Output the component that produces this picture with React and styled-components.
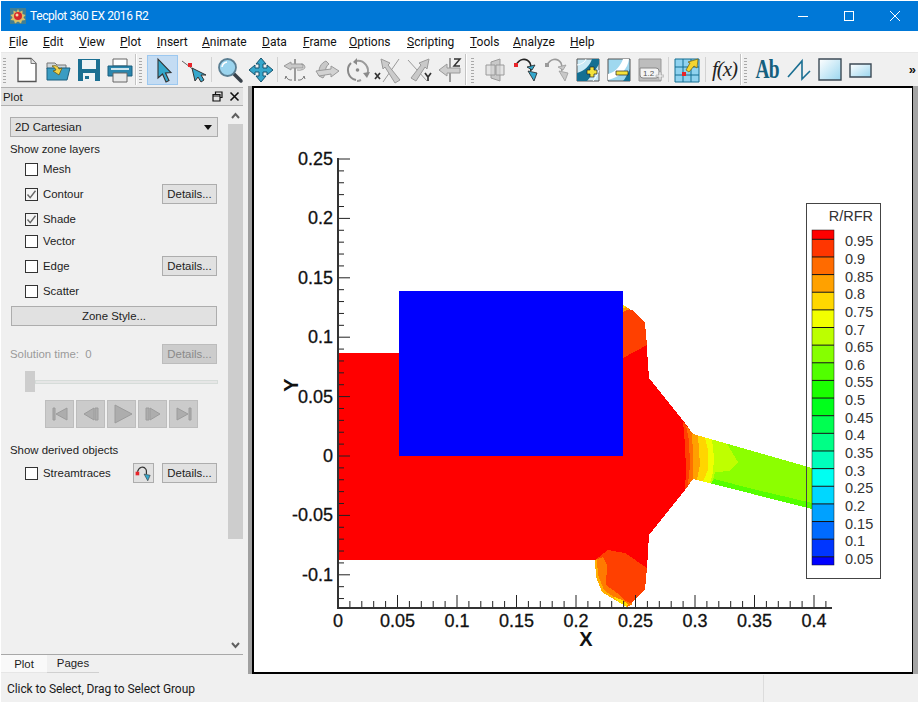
import React from 'react';
import styled, { createGlobalStyle } from 'styled-components';

const Global = createGlobalStyle`
  html, body { margin: 0; padding: 0; background: #fff; }
  #root { width: 919px; height: 703px; overflow: hidden; }
`;

const UI = `Roboto, "Noto Sans", sans-serif`;
const PANEL = `"Liberation Sans", Arial, sans-serif`;

const Win = styled.div`
  width: 919px; height: 703px; box-sizing: border-box; padding: 1px 1px 1px 1px;
  display: flex; flex-direction: column; background: #fff; overflow: hidden;
`;
const TitleBar = styled.div`
  height: 30px; flex: none; background: #0078d7; display: flex; align-items: center;
  color: #fff; font: 12px ${UI};
`;
const TitleIcon = styled.svg`width: 18px; height: 18px; margin: 0 3px 0 8px;`;
const TitleText = styled.span`flex: 1; letter-spacing: -0.4px;`;
const WinBtn = styled.div`
  width: 46px; height: 30px; display: flex; align-items: center; justify-content: center;
`;
const MenuBar = styled.div`
  height: 21px; flex: none; background: #fff; display: flex; align-items: center;
  font: 12px ${UI}; color: #111; padding-left: 8px;
`;
const MenuItem = styled.span`
  width: ${p => p.$w}px; flex: none; white-space: nowrap;
  u { text-underline-offset: 1px; text-decoration-thickness: 1px; }
`;
const Toolbar = styled.div`
  height: 34px; flex: none; display: flex; align-items: center; background: #f0f0f0;
  border-top: 1px solid #e8e8e8; box-sizing: border-box;
`;
const Grip = styled.div`
  width: 3px; height: 26px; margin: 0 ${p => p.$mr ?? 5}px 0 ${p => p.$ml ?? 2}px; flex: none;
  background-image: radial-gradient(#a9a9a9 45%, transparent 50%);
  background-size: 2px 3px;
`;
const GroupEnd = styled.div`width: 1px; height: 31px; background: #c4c4c4; flex: none; border-right: 1px solid #fff;`;
const ThinSep = styled.div`width: 1px; height: 25px; background: #d2d2d2; flex: none; margin: 0 ${p => p.$m ?? 2}px;`;
const Slot = styled.div`
  width: 31px; height: 30px; flex: none; display: flex; align-items: center; justify-content: center;
  box-sizing: border-box;
  ${p => p.$on && 'background: #c4dcf3; border: 1px solid #9cc8f0;'}
`;
const Ic = styled.svg`width: 28px; height: 28px; display: block;`;
const AbLabel = styled.span`
  display: inline-block; font: bold 27px "Liberation Serif", serif; color: #15607e;
  transform: scaleX(0.72); letter-spacing: -1px;
`;
const FxLabel = styled.span`font: italic 21px "Liberation Serif", serif; color: #222; letter-spacing: -1px;`;
const More = styled.span`margin-left: auto; margin-right: 3px; font: bold 13px ${PANEL}; color: #111; letter-spacing: -1px;`;

const Main = styled.div`flex: 1; min-height: 0; display: flex; background: #f0f0f0;`;
const Sidebar = styled.div`width: 242px; flex: none; display: flex; flex-direction: column; font: 11.4px ${PANEL}; color: #1c1c1c;`;
const PanelHead = styled.div`
  height: 19px; flex: none; box-sizing: border-box; margin-top: 1px; background: #e2e2e2;
  border: 1px solid #b0b0b0; border-width: 1px 0; display: flex; align-items: center; padding: 0 3px 0 2px;
`;
const HeadTitle = styled.span`flex: 1;`;
const HeadIcon = styled.svg`width: 11px; height: 11px; margin-left: 6px; display: block;`;
const PanelBody = styled.div`flex: 1; min-height: 0; display: flex; border-bottom: 1px solid #a8a8a8;`;
const Form = styled.div`flex: 1; display: flex; flex-direction: column; padding: 11px 11px 0 9px;`;
const Scroll = styled.div`width: 15px; flex: none; display: flex; flex-direction: column; align-items: center; background: #f0f0f0; margin-top: 1px;`;
const ScrollBtn = styled.svg`width: 15px; height: 17px; flex: none; display: block;`;
const Thumb = styled.div`width: 15px; height: 415px; background: #cdcdcd;`;
const ScrollFill = styled.div`flex: 1;`;
const Combo = styled.div`
  height: 20px; box-sizing: border-box; background: #e1e1e1; border: 1px solid #adadad;
  display: flex; align-items: center; justify-content: space-between; padding: 0 5px 0 4px; margin-right: -1px;
`;
const Arrow = styled.span`width: 0; height: 0; border: 4px solid transparent; border-top: 5px solid #111; border-bottom: 0;`;
const Row = styled.div`
  height: ${p => p.$h ?? 20}px; flex: none; margin-top: ${p => p.$mt ?? 0}px;
  padding-left: ${p => p.$pl ?? 0}px; display: flex; align-items: center;
  color: ${p => p.$off ? '#9a9a9a' : 'inherit'};
`;
const Check = styled.span`
  width: 13px; height: 13px; flex: none; box-sizing: border-box; border: 1px solid #333; background: ${p => p.$on ? '#f4f4f4' : '#fff'};
  margin-right: 5px; display: flex; align-items: center; justify-content: center;
`;
const Btn = styled.div`
  width: ${p => p.$w ? p.$w + 'px' : '100%'}; height: 20px; box-sizing: border-box; flex: none;
  margin-left: ${p => p.$auto ? 'auto' : '0'}; margin-right: ${p => p.$mr ?? 0}px;
  background: ${p => p.$off ? '#cccccc' : '#e1e1e1'}; border: 1px solid ${p => p.$off ? '#bcbcbc' : '#adadad'};
  color: ${p => p.$off ? '#8a8a8a' : '#1c1c1c'};
  display: flex; align-items: center; justify-content: center;
`;
const SliderThumb = styled.div`width: 10px; height: 21px; background: #cdcdcd; flex: none; margin-left: 15px;`;
const SliderTrack = styled.div`flex: 1; height: 4px; background: #e6e6e6; border: 1px solid #d6dcd9; box-sizing: border-box; margin-right: -1px;`;
const Transport = styled.div`display: flex; gap: 2px; margin-top: 8px; padding-left: 35px; height: 28px; flex: none;`;
const TBtn = styled.div`
  width: 29px; height: 28px; box-sizing: border-box; background: #cbcbcb; border: 1px solid #bdbdbd;
  display: flex; align-items: center; justify-content: center;
`;
const Tabs = styled.div`height: 20px; flex: none; display: flex; align-items: flex-start;`;
const Tab = styled.div`
  height: 18px; width: ${p => p.$w}px; box-sizing: border-box; display: flex; align-items: center; justify-content: center;
  background: ${p => p.$on ? '#f9f9f9' : '#f0f0f0'}; border-bottom: 1px solid ${p => p.$on ? '#e6e6e6' : '#d0d0d0'};
  padding-bottom: ${p => p.$on ? 0 : 2}px;
`;
const CanvasWrap = styled.div`
  flex: 1; min-width: 0; display: flex; padding: 0 0 0 9px; margin-bottom: 1px;
`;
const Canvas = styled.div`
  flex: 1; background: #fff; box-sizing: border-box; border: 2px solid #000; border-right-width: 1px; min-width: 0;
  box-shadow: -4px 0 0 #a0a0a0;
`;
const RightEdge = styled.div`width: 5px; background: #a4a4a4; flex: none;`;
const Plot = styled.svg`display: block; width: 658px; height: 584px;`;
const StatusBar = styled.div`
  height: 27px; flex: none; display: flex; align-items: center; font: 12px ${UI}; color: #1a1a1a;
  padding-left: 6px; background: #f0f0f0;
`;
const StatusText = styled.span`width: 756px; flex: none; letter-spacing: -0.08px;`;
const StatusCell = styled.div`flex: 1; height: 100%; border-left: 1px solid #dcdcdc;`;

const Chk = () => (
  <svg width="11" height="11" viewBox="0 0 11 11"><path d="M1.5 5.5 L4.2 8.6 L9.5 1.8" fill="none" stroke="#666" strokeWidth="1.4" /></svg>
);

const Details = ({ off }) => <Btn $w={55} $auto $off={off}>Details...</Btn>;

const B = '#1b6f92';
const G = '#9a9a9a';

const NewIc = () => <Ic viewBox="0 0 28 28"><path d="M5 2.5H18L23 7.5V25.5H5Z" fill="#fff" stroke="#555" strokeWidth="1.3" /><path d="M18 2.5V7.5H23" fill="#e4e4e4" stroke="#777" /></Ic>;
const OpenIc = () => <Ic viewBox="0 0 28 28"><path d="M3 7h8l2 2h9v4H3z" fill="#cfd6da" stroke="#777" /><path d="M3 24V12h23l-3 12z" fill="#3a9cc2" stroke="#1b5f7e" /><path d="M8 10 C12 9 14 10 15 13 L18 12 L15 19 L9 15 L12 14 C11 12 10 11 8 10Z" fill="#f2d24a" stroke="#6b5a10" strokeWidth=".8" /></Ic>;
const SaveIc = () => <Ic viewBox="0 0 28 28"><path d="M3 3h22v22H3z" fill={B} /><path d="M7 4h14v9H7z" fill="#eef3f6" /><path d="M8 17h12v8H8z" fill="#eef3f6" /><path d="M10 20h4v3h-4z" fill={B} /></Ic>;
const PrintIc = () => <Ic viewBox="0 0 28 28"><path d="M7 3h14v7H7z" fill="#fff" stroke="#666" /><path d="M2 10h24v10H2z" fill="#2b86ad" stroke="#1b5f7e" /><path d="M5 12h18v2H5z" fill="#cfe5ee" /><path d="M7 17h14v9H7z" fill="#e9e9e9" stroke="#666" /></Ic>;
const SelIc = () => <Ic viewBox="0 0 28 28"><path d="M9 3 L9 22 L13.5 18 L17 26 L20 24.5 L16.5 17 L22 16.5 Z" fill="#35a7cc" stroke="#333" strokeWidth="1.1" /></Ic>;
const AdjIc = () => <Ic viewBox="0 0 28 28"><path d="M2 5 L18 17" stroke="#666" /><path d="M8 7h4v4H8z" fill="#e8242a" /><path d="M12 12 L15 25 L18 21 L21 26 L24 24 L21 19 L26 19 Z" fill="#35a7cc" stroke="#333" /></Ic>;
const ZoomIc = () => <Ic viewBox="0 0 28 28"><path d="M16 16 L25 25" stroke="#39414a" strokeWidth="3.5" strokeLinecap="round" /><circle cx="11.5" cy="11.5" r="8.5" fill="#9bd4ee" stroke="#5a7e92" strokeWidth="1.8" /><path d="M6 11a6 6 0 0 1 5-5" stroke="#fff" strokeWidth="1.6" fill="none" /></Ic>;
const MoveIc = () => <Ic viewBox="0 0 28 28"><path d="M14 2 L19 8 H16 V12 H20 V9 L26 14 L20 19 V16 H16 V20 H19 L14 26 L9 20 H12 V16 H8 V19 L2 14 L8 9 V12 H12 V8 H9 Z" fill="#35a7cc" stroke="#16536e" strokeWidth="1" /></Ic>;
const Rot1 = () => <Ic viewBox="0 0 28 28"><path d="M14 3v22" stroke={G} strokeWidth="2" /><path d="M10 6 L3 10 L10 14 V12 H22 V8 H10Z" fill="#c9c9c9" stroke={G} /><path d="M5 20a5 5 0 0 0 6 4M23 20a5 5 0 0 1-6 4M5 20l-1 3M23 20l1 3" stroke="#777" fill="none" /><path d="M20 8a6 3 0 0 1 4 3 6 3 0 0 1-8 3" stroke={G} fill="none" /></Ic>;
const Rot2 = () => <Ic viewBox="0 0 28 28"><path d="M14 5 C9 7 6 12 7 20 L11 22 C14 19 12 11 17 8Z" fill="#c9c9c9" stroke={G} /><path d="M4 15 L19 13 V10 L27 15 L19 21 V18 L7 20Z" fill="#d2d2d2" stroke={G} /></Ic>;
const Rot3 = () => <Ic viewBox="0 0 28 28"><path d="M8 7A10 10 0 0 0 13 24" fill="none" stroke="#8a8a8a" strokeWidth="2" /><path d="M13 5A10 10 0 0 1 24 19" fill="none" stroke={G} strokeWidth="2" /><path d="M20 17l4 5 3-6z" fill="#8a8a8a" /><path d="M10 6l4-4v7z" fill="#8a8a8a" /><path d="M18 24a9 9 0 0 1-4 1" stroke={G} strokeWidth="2" fill="none" /><circle cx="14.5" cy="14" r="1.8" fill="#888" /></Ic>;
const RotX = () => <Ic viewBox="0 0 28 28"><path d="M25 3 L9 26" stroke={G} strokeWidth="1" /><path d="M26 24 L14 9 L16 7 L7 3 L9 13 L11 11 L21 27Z" fill="#cbcbcb" stroke={G} /><path d="M1 17l5 6M6 17l-5 6" stroke="#333" strokeWidth="1.7" /></Ic>;
const RotY = () => <Ic viewBox="0 0 28 28"><path d="M3 4 L22 25" stroke={G} strokeWidth="1" /><path d="M6 22 L16 9 L14 7 L24 3 L22 13 L20 11 L11 25Z" fill="#c9c9c9" stroke={G} /><path d="M20 17l3 4 3-4M23 21v4" stroke="#333" strokeWidth="1.7" fill="none" /></Ic>;
const RotZ = () => <Ic viewBox="0 0 28 28"><path d="M14 2v24" stroke={G} strokeWidth="2" /><path d="M11 8 L3 14 L11 20 V17 H24 V12 H11Z" fill="#cdcdcd" stroke={G} /><path d="M18 3h6l-6 7h6" stroke="#333" strokeWidth="1.5" fill="none" /></Ic>;
const Cube = () => <Ic viewBox="0 0 28 28"><path d="M10 6 L19 3 V25 L10 22Z" fill="#c9c9c9" stroke={G} /><path d="M5 9h9v10H5zM15 9h8v10h-8z" fill="#dcdcdc" fillOpacity=".6" stroke={G} /></Ic>;
const Stream = ({ off }) => {
  const line = off ? '#9a9a9a' : '#222';
  const head = off ? '#c8c8c8' : '#35a7cc';
  const sq = off ? '#9a9a9a' : '#e8242a';
  return <Ic viewBox="0 0 28 28"><path d="M4 9 C7 3 14 1 18 7 C20 11 18 13 19 15" fill="none" stroke={line} strokeWidth="1.6" /><path d="M2 7h4v4H2z" fill={sq} /><path d="M15 11 L23 9 L20 14Z" fill={head} stroke={line} strokeWidth=".8" /><path d="M16 15 L25 17 L22 25 Z" fill={head} stroke={line} strokeWidth=".8" /></Ic>;
};
const MiniStream = () => <svg width="19" height="17" viewBox="0 0 28 28"><path d="M4 11 C7 3 14 1 18 7 C20 11 18 13 19 15" fill="none" stroke="#333" strokeWidth="2" /><path d="M1 11h6v6H1z" fill="#e8242a" /><path d="M15 15 L25 17 L21 26 Z" fill="#35a7cc" stroke="#333" /></svg>;
const ContourAdd = () => <Ic viewBox="0 0 28 28"><path d="M3 3h22v22H3z" fill="#c9e9f6" stroke="#555" /><path d="M3 17 C11 15 16 9 18 3 H25 V8 C21 15 15 23 13 25 H3Z" fill="#146f92" /><path d="M3 9 C8 8 11 6 12 3" stroke="#fff" fill="none" /><path d="M25 14C23 19 21 23 19 25" stroke="#fff" fill="none" /><path d="M13 14h3v-3h4v3h3v4h-3v3h-4v-3h-3z" fill="#f4e23a" stroke="#222" strokeWidth=".7" /></Ic>;
const ContourSub = () => <Ic viewBox="0 0 28 28"><path d="M3 3h22v22H3z" fill="#9fd8ef" stroke="#555" /><path d="M3 18 C11 16 16 9 18 3 H24 C23 12 16 21 3 24Z" fill="#fff" /><path d="M25 13 C22 19 20 23 18 25 H25Z" fill="#146f92" /><path d="M11 15h12v4H11z" fill="#f4e23a" stroke="#222" strokeWidth=".7" /></Ic>;
const LabelIc = () => <Ic viewBox="0 0 28 28"><path d="M3 3h22v22H3z" fill="#bdbdbd" stroke="#999" /><path d="M4 12h16a3 3 0 0 1 3 3v4a3 3 0 0 1-3 3H7a3 3 0 0 1-3-3z" fill="#f4f4f4" stroke="#888" /><text x="7" y="20" fontSize="8" fontFamily="Liberation Sans" fill="#555">1.2</text><path d="M20 19h3v-3h2v3h3v2h-3v3h-2v-3h-3z" fill="#e8e8e8" stroke="#999" strokeWidth=".5" /></Ic>;
const GridIc = () => <Ic viewBox="0 0 28 28"><path d="M2 3h24v23H2z" fill="#8fd2ef" stroke="#146f92" /><path d="M2 11h24M2 19h24M10 3v23M18 3v23" stroke="#146f92" /><path d="M13 14 L17 7 L15 6 L25 3 L24 12 L21 10 L16 16Z" fill="#f4d52f" stroke="#6b5a10" strokeWidth=".7" /><path d="M9 16h4v4H9z" fill="#e8242a" /></Ic>;
const Zig = () => <Ic viewBox="0 0 28 28"><path d="M3 21 L17 5 V23 L25 15" fill="none" stroke={B} strokeWidth="1.6" /></Ic>;
const Rect1 = () => <Ic viewBox="0 0 28 28"><defs><linearGradient id="gr1" x1="0" y1="0" x2="1" y2="1"><stop offset="0" stopColor="#fff" /><stop offset="1" stopColor="#9ad6ef" /></linearGradient></defs><path d="M3 3h22v21H3z" fill="url(#gr1)" stroke="#3c4a55" strokeWidth="1.4" /></Ic>;
const Rect2 = () => <Ic viewBox="0 0 28 28"><defs><linearGradient id="gr2" x1="0" y1="0" x2="1" y2="1"><stop offset="0" stopColor="#fff" /><stop offset="1" stopColor="#9ad6ef" /></linearGradient></defs><path d="M3 8h21v13H3z" fill="url(#gr2)" stroke="#3c4a55" strokeWidth="1.4" /></Ic>;

const TGlyph = ({ d, w = 20 }) => (
  <svg width={w} height="20" viewBox="0 0 20 20"><path d={d} fill="#adadad" stroke="#9c9c9c" /></svg>
);

const MENU = [
  ['F', 'ile', 34], ['E', 'dit', 36], ['V', 'iew', 41], ['P', 'lot', 37], ['I', 'nsert', 45], ['A', 'nimate', 60],
  ['D', 'ata', 41], ['F', 'rame', 46], ['O', 'ptions', 58], ['S', 'cripting', 63], ['T', 'ools', 43], ['A', 'nalyze', 57], ['H', 'elp', 30],
];

const X0 = 338, XS = 1190;
const Y0 = 456, YS = 1188;
const xTicks = ['0', '0.05', '0.1', '0.15', '0.2', '0.25', '0.3', '0.35', '0.4'];
const yTicks = ['0.25', '0.2', '0.15', '0.1', '0.05', '0', '-0.05', '-0.1'];
const LEG = ['0.95', '0.9', '0.85', '0.8', '0.75', '0.7', '0.65', '0.6', '0.55', '0.5', '0.45', '0.4', '0.35', '0.3', '0.25', '0.2', '0.15', '0.1', '0.05'];

const AxisText = styled.text`font: 18px "Liberation Sans", Arial, sans-serif; fill: #111; stroke: #111; stroke-width: 0.3px;`;
const AxisTitle = styled.text`font: bold 20px "Liberation Sans", Arial, sans-serif; fill: #111;`;
const LegText = styled.text`font: 14.5px "Liberation Sans", Arial, sans-serif; fill: #333;`;

const PlotArea = () => {
  const minorX = [];
  for (let i = 0; i <= 41; i++) minorX.push(X0 + i * 0.01 * XS);
  const minorY = [];
  for (let i = -12; i <= 25; i++) minorY.push(Y0 - i * 0.01 * YS);
  const barTop = 230, lineStep = 17.64, firstLine = 239.3;
  return (
    <Plot viewBox="254 88 658 584">
      <g shapeRendering="crispEdges">
        <path d="M338 353 H399 V305 L623 305 L645 323 L649 378 L685 423 L693 434 L812 468 V509 L693 479 L685 490 L649 535 L647 568 L645 590 L627 607 L620 603 L602 592 L596 577 L595 560 H338Z" fill="#ff0000" />
        <path d="M623 358 V308 L632 310 L645 323 L647 345Z" fill="#ff4000" />
        <path d="M623 312 V305 L630 309Z" fill="#ff9900" />
        <path d="M623 308 V305 L627 307Z" fill="#ffe000" />
        <path d="M595 560 L608 550 L625 553 L647 568 L645 590 L627 607 L620 603 L602 592 L596 577Z" fill="#ff4000" />
        <path d="M595 560 L603 557 L607 565 L606 585 L617 593 L626 601 L633 604 L627 607 L620 603 L602 592 L596 577Z" fill="#ff7a00" />
        <path d="M595 560 L597 560 L598 575 L604 590 L615 598 L624 602 L627 607 L620 603 L602 592 L596 577Z" fill="#ffb000" />
        <path d="M612 596 L622 600 L628 604 L627 607 L620 603Z" fill="#ffe000" />
        <path d="M683 421 L693 434 L812 468 V509 L693 479 L685 490 L686 470 L685 445Z" fill="#ff4000" />
        <path d="M686 425 L693 434 L812 468 V509 L693 479 L688 484 L690 465 L689 440Z" fill="#ff7000" />
        <path d="M692 433.7 L812 468 V509 L693 479 L693 455Z" fill="#ffa000" />
        <path d="M698 435.4 L812 468 V509 L697 480 L700 465Z" fill="#ffd500" />
        <path d="M705 437.4 L812 468 V509 L703 481.5 L708 470 L708 450Z" fill="#f0ff00" />
        <path d="M712 439.4 L812 468 V509 L710 483.3 L713 472 L714 458Z" fill="#bfff00" />
        <path d="M727 443.7 L812 468 V509 L712 483.8 L715 472 L730 471 L738 462Z" fill="#8cff00" />
        <path d="M714 479 L757 490 L812 503 V509 L711 483.5Z" fill="#55ff00" />
        <rect x="399" y="291" width="224" height="165" fill="#0000ff" />
      </g>
      {minorX.map((x, i) => <line key={i} x1={x} x2={x} y1={i % 5 === 0 ? 595 : 601} y2="608" stroke="#222" strokeWidth="1" />)}
      {minorY.map((y, i) => <line key={i} x1="338" x2={i % 5 === 2 ? 350 : 344} y1={y} y2={y} stroke="#222" strokeWidth="1" />)}
      <path d="M338 158 V608 H832" fill="none" stroke="#333" strokeWidth="2" />
      {xTicks.map((t, i) => <AxisText key={t} x={X0 + i * 0.05 * XS} y="627" textAnchor="middle">{t}</AxisText>)}
      {yTicks.map((t, i) => <AxisText key={t} x="333" y={Y0 - (0.25 - i * 0.05) * YS + 6} textAnchor="end">{t}</AxisText>)}
      <AxisTitle x="586" y="646" textAnchor="middle">X</AxisTitle>
      <AxisTitle transform="translate(298 385) rotate(-90)" textAnchor="middle">Y</AxisTitle>
      <rect x="806.5" y="203.5" width="74" height="375" fill="none" stroke="#444" strokeWidth="1" />
      <LegText x="873" y="221" textAnchor="end">R/RFR</LegText>
      {Array.from({ length: 20 }).map((_, i) => {
        const top = i === 0 ? barTop : firstLine + (i - 1) * lineStep;
        const bot = i === 19 ? 565 : firstLine + i * lineStep;
        return <rect key={i} x="812" width="22" y={top} height={bot - top} fill={`hsl(${i * 240 / 19}, 100%, 50%)`} />;
      })}
      {LEG.map((t, i) => {
        const y = firstLine + i * lineStep;
        return (
          <g key={t}>
            <line x1="812" x2="834" y1={y} y2={y} stroke="#111" strokeWidth="1" />
            <LegText x="845" y={y + 7}>{t}</LegText>
          </g>
        );
      })}
      <rect x="812" y="230" width="22" height="335" fill="none" stroke="#111" strokeWidth=".5" />
    </Plot>
  );
};

export default function App() {
  return (
    <Win>
      <Global />
      <TitleBar>
        <TitleIcon viewBox="0 0 18 18">
          <rect x="1" y="1" width="16" height="16" fill="#3f7f96" />
          <path d="M9 2l1.5 3 3-1.5 0 3.5 3 1-2 2.5 2 2.5-3.5.5-1 3-3-2-3 2-1-3-3.5-.5 2-2.5-2-2.5 3-1 0-3.5 3 1.5z" fill="#d8c06a" />
          <circle cx="9" cy="9" r="4" fill="#d6262a" />
          <circle cx="8" cy="8" r="1.5" fill="#f6d7a0" />
        </TitleIcon>
        <TitleText>Tecplot 360 EX 2016 R2</TitleText>
        <WinBtn><svg width="10" height="10"><path d="M0 5.5H10" stroke="#fff" /></svg></WinBtn>
        <WinBtn><svg width="10" height="10"><rect x=".5" y=".5" width="9" height="9" fill="none" stroke="#fff" /></svg></WinBtn>
        <WinBtn><svg width="10" height="10"><path d="M0 0L10 10M10 0L0 10" stroke="#fff" /></svg></WinBtn>
      </TitleBar>
      <MenuBar>
        {MENU.map(([a, b, w], i) => <MenuItem key={i} $w={w}><u>{a}</u>{b}</MenuItem>)}
      </MenuBar>
      <Toolbar>
        <Grip />
        <Slot><NewIc /></Slot><Slot><OpenIc /></Slot><Slot><SaveIc /></Slot><Slot><PrintIc /></Slot>
        <GroupEnd />
        <Grip $ml={2} />
        <Slot $on><SelIc /></Slot><Slot><AdjIc /></Slot>
        <ThinSep />
        <Slot><ZoomIc /></Slot><Slot><MoveIc /></Slot>
        <ThinSep $m={1} />
        <Slot><Rot1 /></Slot><Slot><Rot2 /></Slot><Slot><Rot3 /></Slot><Slot><RotX /></Slot><Slot><RotY /></Slot><Slot><RotZ /></Slot>
        <GroupEnd />
        <Grip $ml={4} />
        <Slot><Cube /></Slot><Slot><Stream /></Slot><Slot><Stream off /></Slot><Slot><ContourAdd /></Slot><Slot><ContourSub /></Slot><Slot><LabelIc /></Slot>
        <ThinSep $m={2.5} />
        <Slot><GridIc /></Slot>
        <ThinSep $m={3} />
        <Slot><FxLabel>f(x)</FxLabel></Slot>
        <GroupEnd />
        <Grip $ml={2} />
        <Slot><AbLabel>Ab</AbLabel></Slot><Slot><Zig /></Slot><Slot><Rect1 /></Slot><Slot><Rect2 /></Slot>
        <More>»</More>
      </Toolbar>
      <Main>
        <Sidebar>
          <PanelHead>
            <HeadTitle>Plot</HeadTitle>
            <HeadIcon viewBox="0 0 11 11"><path d="M3.5 3V1h6.5v5.5H8M1 3.5h7v6.5H1z M1 3.5h7v1.5H1z" fill="none" stroke="#111" strokeWidth="1.2" /></HeadIcon>
            <HeadIcon viewBox="0 0 11 11"><path d="M1.5 1.5L9.5 9.5M9.5 1.5L1.5 9.5" stroke="#111" strokeWidth="1.6" /></HeadIcon>
          </PanelHead>
          <PanelBody>
            <Form>
              <Combo>2D Cartesian<Arrow /></Combo>
              <Row $mt={2}>Show zone layers</Row>
              <Row $pl={15}><Check />Mesh</Row>
              <Row $pl={15} $mt={5}><Check $on><Chk /></Check>Contour<Details /></Row>
              <Row $pl={15} $mt={5}><Check $on><Chk /></Check>Shade</Row>
              <Row $pl={15} $mt={2}><Check />Vector</Row>
              <Row $pl={15} $mt={5}><Check />Edge<Details /></Row>
              <Row $pl={15} $mt={5}><Check />Scatter</Row>
              <Row $pl={1} $mt={5}><Btn>Zone Style...</Btn></Row>
              <Row $mt={18} $off>Solution time:&nbsp; 0<Details off /></Row>
              <Row $h={21} $mt={7}><SliderThumb /><SliderTrack /></Row>
              <Transport>
                <TBtn><TGlyph d="M3 4h2v12H3zM17 4v12L6 10z" /></TBtn>
                <TBtn><TGlyph d="M13 4v12L3 10zM14 4h3v12h-3z" /></TBtn>
                <TBtn><TGlyph w={22} d="M3 1v18l17-9z" /></TBtn>
                <TBtn><TGlyph d="M3 4h3v12H3zM7 4v12l10-6z" /></TBtn>
                <TBtn><TGlyph d="M3 4v12l11-6zM15 4h2v12h-2z" /></TBtn>
              </Transport>
              <Row $mt={12}>Show derived objects</Row>
              <Row $pl={15} $mt={3}>
                <Check />Streamtraces
                <Btn $w={21} $auto $mr={8}><MiniStream /></Btn>
                <Btn $w={55}>Details...</Btn>
              </Row>
            </Form>
            <Scroll>
              <ScrollBtn viewBox="0 0 15 17"><path d="M4 11l3.5-4 3.5 4" fill="none" stroke="#606060" strokeWidth="2" /></ScrollBtn>
              <Thumb />
              <ScrollFill />
              <ScrollBtn viewBox="0 0 15 17"><path d="M4 6l3.5 4 3.5-4" fill="none" stroke="#606060" strokeWidth="2" /></ScrollBtn>
            </Scroll>
          </PanelBody>
          <Tabs>
            <Tab $on $w={46}>Plot</Tab>
            <Tab $w={52}>Pages</Tab>
          </Tabs>
        </Sidebar>
        <CanvasWrap>
          <Canvas><PlotArea /></Canvas>
          <RightEdge />
        </CanvasWrap>
      </Main>
      <StatusBar>
        <StatusText>Click to Select, Drag to Select Group</StatusText>
        <StatusCell />
      </StatusBar>
    </Win>
  );
}
